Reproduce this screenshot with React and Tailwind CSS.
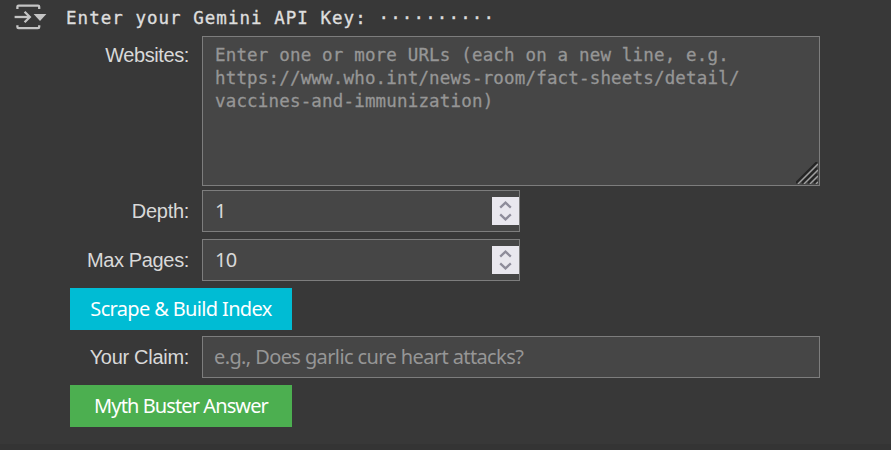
function OutputIcon() {
  return (
    <svg width="34" height="30" viewBox="0 0 34 30" fill="none" stroke="#c4c4c4" strokeWidth="2.3" className="block">
      <path d="M3.4 9V6.8Q3.4 5.6 4.6 5.6H24Q25.2 5.6 25.2 6.8V9" />
      <path d="M3.4 25.2V27Q3.4 28.2 4.6 28.2H24Q25.2 28.2 25.2 27V25.2" />
      <path d="M0.6 17H15.6" />
      <path d="M10.6 11.8L15.8 17L10.6 22.2" />
      <path d="M19.6 14H32.4L26 21Z" fill="#c4c4c4" stroke="none" />
    </svg>
  );
}

function Spinner() {
  return (
    <span className="ml-auto flex h-7 w-[27px] items-center justify-center bg-[#e9e7ee]">
      <svg width="27" height="28" viewBox="0 0 27 28" fill="none" stroke="#8e8c9a" strokeWidth="2.3">
        <path d="M8.2 10.6L13.5 5.6L18.8 10.6" />
        <path d="M8.2 17.4L13.5 22.4L18.8 17.4" />
      </svg>
    </span>
  );
}

function Label({ children, tracking }) {
  return (
    <div className={`w-[189px] shrink-0 text-right font-['Liberation_Sans',sans-serif] text-[20px] text-[#d9d9d9] ${tracking}`}>
      {children}
    </div>
  );
}

function NumberRow({ label, value, tracking }) {
  return (
    <div className="flex h-[42px] items-center">
      <Label tracking={tracking}>{label}</Label>
      <div className="ml-[13px] flex h-[42px] w-[318px] items-center border border-[#7d7d7d] bg-[#464646] pl-3 text-[20px] tracking-[-0.6px] text-[#d9d9d9]">
        <span>{value}</span>
        <Spinner />
      </div>
    </div>
  );
}

export default function App() {
  return (
    <div className="flex h-[450px] w-[891px] flex-col overflow-hidden bg-[#383838] font-['Noto_Sans',sans-serif] whitespace-nowrap">
      <div className="flex h-9 shrink-0 items-start">
        <div className="ml-[14px] w-[52px]">
          <OutputIcon />
        </div>
        <div className="flex pt-[6px] font-['DejaVu_Sans_Mono',monospace] text-[17.5px] leading-6 text-[#dedede] [-webkit-text-stroke:0.35px]">
          <span className="w-[312.5px] tracking-[1.03px]">Enter your Gemini API Key:</span>
          <span className="tracking-[1.13px]">··········</span>
        </div>
      </div>
      <div className="flex h-[150px] shrink-0">
        <div className="pt-1">
          <Label tracking="tracking-[-0.4px]">Websites:</Label>
        </div>
        <div className="relative ml-[13px] w-[618px] border border-[#7d7d7d] bg-[#464646] pt-[7px] pl-3 font-['DejaVu_Sans_Mono',monospace] text-[17.5px] leading-[23px] tracking-[0.17px] text-[#969696] [-webkit-text-stroke:0.3px]">
          <div>Enter one or more URLs (each on a new line, e.g.</div>
          <div>https://www.who.int/news-room/fact-sheets/detail/</div>
          <div>vaccines-and-immunization)</div>
          <svg className="absolute right-px bottom-px" width="22" height="22" viewBox="0 0 22 22" fill="none">
            <path d="M0 21L21 0M6 21L21 6M12 21L21 12M18 21L21 18" stroke="#242424" strokeWidth="2" />
            <path d="M2 22L22 2M8 22L22 8M14 22L22 14M20 22L22 20" stroke="#a0a0a0" strokeWidth="1.3" />
          </svg>
        </div>
      </div>
      <div className="mt-1 flex flex-col gap-[6.75px]">
        <NumberRow label="Depth:" value="1" tracking="tracking-[-0.3px]" />
        <NumberRow label="Max Pages:" value="10" tracking="tracking-[-0.35px]" />
        <button className="ml-[70px] h-[42px] w-[222px] bg-[#00bcd4] text-[20px] tracking-[-0.65px] text-white">
          Scrape &amp; Build Index
        </button>
        <div className="flex h-[42px] items-center">
          <Label tracking="tracking-[-0.3px]">Your Claim:</Label>
          <div className="ml-[13px] flex h-[42px] w-[618px] items-center border border-[#7d7d7d] bg-[#464646] pl-[11px] text-[20px] tracking-[-0.61px] text-[#969696]">
            e.g., Does garlic cure heart attacks?
          </div>
        </div>
        <button className="ml-[70px] h-[42px] w-[222px] bg-[#4caf50] text-[20px] tracking-[-0.9px] text-white">
          Myth Buster Answer
        </button>
      </div>
      <div className="mt-auto h-[6px] bg-[#343434]" />
    </div>
  );
}
